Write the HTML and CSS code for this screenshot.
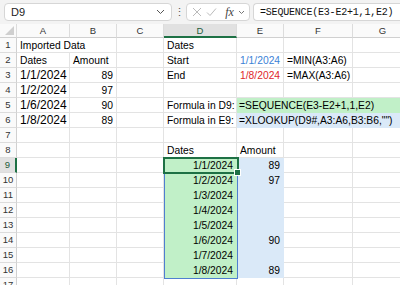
FILE: index.html
```html
<!DOCTYPE html>
<html lang="en">
<head>
    <meta charset="UTF-8">
    <title>Sheet - SEQUENCE</title>
    <link rel="stylesheet" href="styles.css">
</head>
<body>
    <div class="topbar">
        <div class="namebox">
            <span>D9</span>
            <svg class="chev" width="9" height="6" viewBox="0 0 9 6"><path d="M1 1l3.5 3.5L8 1" fill="none" stroke="#555" stroke-width="1"/></svg>
        </div>
        <div class="dots">&#8942;</div>
        <div class="fxbox">
            <svg width="10" height="10" viewBox="0 0 10 10"><path d="M1 1l8 8M9 1l-8 8" stroke="#bbb" stroke-width="1"/></svg>
            <svg width="11" height="10" viewBox="0 0 11 10"><path d="M1 5.5l3 3L10 1.5" fill="none" stroke="#bbb" stroke-width="1"/></svg>
            <span class="fx">fx</span>
            <svg width="7" height="5" viewBox="0 0 7 5"><path d="M1 1l2.5 2.5L6 1" fill="none" stroke="#777" stroke-width="1"/></svg>
        </div>
        <div class="formula">=SEQUENCE(E3-E2+1,1,E2)</div>
    </div>

    <div class="sheet">
        <div class="h corner"><span class="tri"></span></div>
        <div class="h">A</div>
        <div class="h">B</div>
        <div class="h">C</div>
        <div class="h sel-col">D</div>
        <div class="h">E</div>
        <div class="h">F</div>
        <div class="h">G</div>

        <div class="rh">1</div>
        <div class="c span2">Imported Data</div>
        <div class="c"></div>
        <div class="c">Dates</div>
        <div class="c"></div>
        <div class="c"></div>
        <div class="c"></div>

        <div class="rh">2</div>
        <div class="c">Dates</div>
        <div class="c">Amount</div>
        <div class="c"></div>
        <div class="c">Start</div>
        <div class="c num start">1/1/2024</div>
        <div class="c">=MIN(A3:A6)</div>
        <div class="c"></div>

        <div class="rh">3</div>
        <div class="c big">1/1/2024</div>
        <div class="c num">89</div>
        <div class="c"></div>
        <div class="c">End</div>
        <div class="c num end">1/8/2024</div>
        <div class="c">=MAX(A3:A6)</div>
        <div class="c"></div>

        <div class="rh">4</div>
        <div class="c big">1/2/2024</div>
        <div class="c num">97</div>
        <div class="c"></div>
        <div class="c"></div>
        <div class="c"></div>
        <div class="c"></div>
        <div class="c"></div>

        <div class="rh">5</div>
        <div class="c big">1/6/2024</div>
        <div class="c num">90</div>
        <div class="c"></div>
        <div class="c">Formula in D9:</div>
        <div class="c span3 green">=SEQUENCE(E3-E2+1,1,E2)</div>

        <div class="rh">6</div>
        <div class="c big">1/8/2024</div>
        <div class="c num">89</div>
        <div class="c"></div>
        <div class="c">Formula in E9:</div>
        <div class="c span3 blue">=XLOOKUP(D9#,A3:A6,B3:B6,"")</div>

        <div class="rh">7</div>
        <div class="c"></div>
        <div class="c"></div>
        <div class="c"></div>
        <div class="c"></div>
        <div class="c"></div>
        <div class="c"></div>
        <div class="c"></div>

        <div class="rh">8</div>
        <div class="c"></div>
        <div class="c"></div>
        <div class="c"></div>
        <div class="c">Dates</div>
        <div class="c">Amount</div>
        <div class="c"></div>
        <div class="c"></div>

        <div class="rh sel-row">9</div>
        <div class="c"></div>
        <div class="c"></div>
        <div class="c"></div>
        <div class="c num green">1/1/2024</div>
        <div class="c num blue">89</div>
        <div class="c"></div>
        <div class="c"></div>

        <div class="rh">10</div>
        <div class="c"></div>
        <div class="c"></div>
        <div class="c"></div>
        <div class="c num green">1/2/2024</div>
        <div class="c num blue">97</div>
        <div class="c"></div>
        <div class="c"></div>

        <div class="rh">11</div>
        <div class="c"></div>
        <div class="c"></div>
        <div class="c"></div>
        <div class="c num green">1/3/2024</div>
        <div class="c num blue"></div>
        <div class="c"></div>
        <div class="c"></div>

        <div class="rh">12</div>
        <div class="c"></div>
        <div class="c"></div>
        <div class="c"></div>
        <div class="c num green">1/4/2024</div>
        <div class="c num blue"></div>
        <div class="c"></div>
        <div class="c"></div>

        <div class="rh">13</div>
        <div class="c"></div>
        <div class="c"></div>
        <div class="c"></div>
        <div class="c num green">1/5/2024</div>
        <div class="c num blue"></div>
        <div class="c"></div>
        <div class="c"></div>

        <div class="rh">14</div>
        <div class="c"></div>
        <div class="c"></div>
        <div class="c"></div>
        <div class="c num green">1/6/2024</div>
        <div class="c num blue">90</div>
        <div class="c"></div>
        <div class="c"></div>

        <div class="rh">15</div>
        <div class="c"></div>
        <div class="c"></div>
        <div class="c"></div>
        <div class="c num green">1/7/2024</div>
        <div class="c num blue"></div>
        <div class="c"></div>
        <div class="c"></div>

        <div class="rh">16</div>
        <div class="c"></div>
        <div class="c"></div>
        <div class="c"></div>
        <div class="c num green">1/8/2024</div>
        <div class="c num blue">89</div>
        <div class="c"></div>
        <div class="c"></div>

        <div class="rh">17</div>
        <div class="c"></div>
        <div class="c"></div>
        <div class="c"></div>
        <div class="c"></div>
        <div class="c"></div>
        <div class="c"></div>
        <div class="c"></div>

        <div class="spill"></div>
        <div class="active"><span class="handle"></span></div>
    </div>
</body>
</html>
```

FILE: styles.css
```css
body {
    margin: 0;
    font-family: "Liberation Sans", Arial, sans-serif;
    background: #fff;
    width: 400px;
    height: 285px;
    overflow: hidden;
}
.topbar {
    height: 24px;
    background: #f3f3f3;
    display: flex;
    align-items: center;
    padding: 0 0 0 4px;
    box-sizing: border-box;
}
.namebox, .fxbox, .formula {
    height: 18px;
    background: #fff;
    border: 1px solid #d6d6d6;
    border-radius: 4px;
    box-sizing: border-box;
    display: flex;
    align-items: center;
}
.namebox {
    width: 168px;
    padding: 0 6px 0 6px;
    justify-content: space-between;
    font-size: 11px;
    color: #222;
}
.dots {
    width: 14px;
    text-align: center;
    color: #555;
    font-size: 11px;
}
.fxbox {
    width: 64px;
    padding: 0 4px 0 5px;
    justify-content: space-between;
    margin-right: 3px;
}
.fx {
    font-family: "Liberation Serif", serif;
    font-style: italic;
    font-size: 12px;
    color: #444;
    margin-left: 4px;
}
.formula {
    flex: 1;
    border-right: none;
    border-radius: 4px 0 0 4px;
    padding-left: 6px;
    font-family: "Liberation Mono", monospace;
    font-size: 10px;
    letter-spacing: -0.2px;
    color: #111;
    white-space: nowrap;
    overflow: hidden;
}
.sheet {
    position: relative;
    display: grid;
    grid-template-columns: 17px 53px 47px 47px 73px 47px 69px 60px;
    grid-template-rows: 14px;
    grid-auto-rows: 15px;
    font-size: 10.3px;
    color: #000;
}
.h {
    border-right: 1px solid #dcdcdc;
    border-bottom: 1px solid #d0d0d0;
    box-sizing: border-box;
    text-align: center;
    font-size: 9.5px;
    line-height: 13px;
    color: #333;
    background: #fafafa;
}
.corner {
    position: relative;
}
.tri {
    position: absolute;
    right: 2px;
    bottom: 2px;
    width: 0;
    height: 0;
    border-left: 9px solid transparent;
    border-bottom: 9px solid #cfcfcf;
}
.sel-col {
    background: #e1e1e1;
    border-bottom: 2px solid #1e7145;
    color: #1e5d3a;
}
.rh {
    border-right: 1px solid #d0d0d0;
    border-bottom: 1px solid #dcdcdc;
    box-sizing: border-box;
    text-align: center;
    font-size: 9.5px;
    line-height: 14px;
    color: #333;
    background: #fafafa;
}
.sel-row {
    background: #e1e1e1;
    border-right: 2px solid #1e7145;
    color: #1e5d3a;
}
.c {
    border-right: 1px solid #e3e3e3;
    border-bottom: 1px solid #e3e3e3;
    box-sizing: border-box;
    padding: 0 3px;
    line-height: 15px;
    white-space: nowrap;
}
.span2 {
    grid-column: span 2;
}
.span3 {
    grid-column: span 3;
}
.num {
    text-align: right;
}
.big {
    font-size: 12px;
}
.start {
    color: #3b82d6;
}
.end {
    color: #e0262b;
}
.green {
    background: #c1f0c8;
    border-color: #c1f0c8;
}
.blue {
    background: #dae9f8;
    border-color: #dae9f8;
}
.span3.green, .span3.blue {
    padding-left: 2px;
}
.spill {
    position: absolute;
    left: 164px;
    top: 134px;
    width: 74px;
    height: 121px;
    border: 1px solid #4f7fd0;
    box-sizing: border-box;
}
.active {
    position: absolute;
    left: 163px;
    top: 133px;
    width: 76px;
    height: 17px;
    border: 2px solid #1e7145;
    box-sizing: border-box;
}
.handle {
    position: absolute;
    right: -4px;
    bottom: -4px;
    width: 5px;
    height: 5px;
    background: #1e7145;
    border: 1px solid #fff;
}
```
